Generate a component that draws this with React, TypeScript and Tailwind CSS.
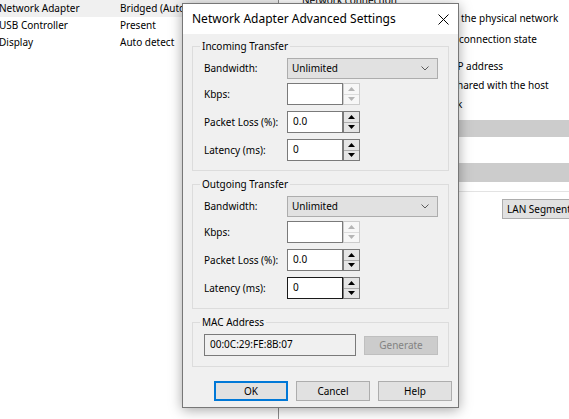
import React from 'react';

const UpArrow = ({ color }: { color: string }) => (
  <svg width="7" height="4" viewBox="0 0 7 4">
    <path d="M3.5 0 L7 4 L0 4 Z" fill={color} />
  </svg>
);

const DownArrow = ({ color }: { color: string }) => (
  <svg width="7" height="4" viewBox="0 0 7 4">
    <path d="M0 0 L7 0 L3.5 4 Z" fill={color} />
  </svg>
);

const Select = () => (
  <div className="flex items-center justify-between w-[151px] h-[21px] bg-[#e1e1e1] border border-[#adadad] pl-[4px] pr-[8px]">
    <span>Unlimited</span>
    <svg width="8" height="5" viewBox="0 0 8 5">
      <path d="M0.5 0.5 L4 4 L7.5 0.5" fill="none" stroke="#5a5a5a" strokeWidth="1" />
    </svg>
  </div>
);

const SpinBox = ({ value, disabled, focused }: { value: string; disabled?: boolean; focused?: boolean }) => (
  <div className="flex h-[22px]">
    <div
      className={`w-[56px] h-full bg-white border pl-[5px] pt-[2px] leading-[14px] ${focused ? 'border-[#1a1a1a]' : 'border-[#7a7a7a]'}`}
    >
      {value}
    </div>
    <div className={`flex flex-col w-[17px] h-full border ${disabled ? 'border-[#cccccc] bg-[#f7f7f7]' : 'border-[#7a7a7a] bg-[#e5e5e5]'}`}>
      <div className={`flex-1 flex items-center justify-center border-b ${disabled ? 'border-[#dcdcdc]' : 'border-[#adadad]'}`}>
        <UpArrow color={disabled ? '#b5b5b5' : '#000'} />
      </div>
      <div className="flex-1 flex items-center justify-center">
        <DownArrow color={disabled ? '#b5b5b5' : '#000'} />
      </div>
    </div>
  </div>
);

const Row = ({ label, children }: { label: string; children: React.ReactNode }) => (
  <div className="flex items-center">
    <span className="w-[83px]">{label}</span>
    {children}
  </div>
);

const TransferGroup = ({ title, focusLatency }: { title: string; focusLatency?: boolean }) => (
  <div className="relative border border-[#dcdcdc] pl-[11px] pt-[11px] pb-[9px]">
    <span className="absolute left-[7px] top-[-8px] bg-[#f0f0f0] px-[2px] leading-[14px]">{title}</span>
    <div className="flex flex-col gap-[6px]">
      <Row label="Bandwidth:">
        <Select />
      </Row>
      <div className="flex flex-col gap-[6px] mt-[-2px]">
        <Row label="Kbps:">
          <SpinBox value="" disabled />
        </Row>
        <Row label="Packet Loss (%):">
          <SpinBox value="0.0" />
        </Row>
        <Row label="Latency (ms):">
          <SpinBox value="0" focused={focusLatency} />
        </Row>
      </div>
    </div>
  </div>
);

const Button = ({ label, primary }: { label: string; primary?: boolean }) => (
  <button
    className={`w-[74px] h-[20px] bg-[#e1e1e1] flex items-center justify-center text-black ${primary ? 'border-2 border-[#0078d7]' : 'border border-[#adadad]'}`}
  >
    {label}
  </button>
);

export default function App() {
  return (
    <div className="relative w-[569px] h-[419px] overflow-hidden bg-white text-[10px] text-black font-['Noto_Sans',sans-serif]">
      <div className="flex h-full">
        {/* device list */}
        <div className="w-[278px] shrink-0 flex flex-col">
          <div className="flex h-[17px] items-center bg-[#f0f0f0] pl-[1px]">
            <span className="w-[121px] ml-[-2px]">Network Adapter</span>
            <span className="whitespace-nowrap">Bridged (Automatic)</span>
          </div>
          <div className="flex h-[17px] items-center pl-[1px]">
            <span className="w-[121px] ml-[-2px]">USB Controller</span>
            <span>Present</span>
          </div>
          <div className="flex h-[17px] items-center pl-[1px]">
            <span className="w-[121px] ml-[-2px]">Display</span>
            <span>Auto detect</span>
          </div>
        </div>

        {/* settings panel */}
        <div className="flex-1 min-w-0 overflow-hidden flex flex-col border-l border-[#8c8c8c] leading-[14px]">
          <div className="h-[14px] mt-[-7px] pl-[23px] whitespace-nowrap">Network connection</div>
          <div className="h-[14px] mt-[4px] pl-[182px] whitespace-nowrap">the physical network</div>
          <div className="h-[14px] mt-[7px] pl-[180px] whitespace-nowrap">connection state</div>
          <div className="h-[14px] mt-[13px] pl-[175px] whitespace-nowrap">IP address</div>
          <div className="h-[14px] mt-[5px] pl-[178px] whitespace-nowrap">hared with the host</div>
          <div className="h-[14px] mt-[5px] pl-[178px]">k</div>
          <div className="h-[17px] mt-[9px] bg-[#cccccc]" />
          <div className="h-[19px] mt-[26px] bg-[#cccccc]" />
          <div className="h-px mt-[9px] bg-[#e3e3e3]" />
          <div className="mt-[7px] pl-[223px]">
            <div className="h-[20px] w-[120px] bg-[#e1e1e1] border border-[#adadad] pl-[4px] flex items-center whitespace-nowrap">
              LAN Segments...
            </div>
          </div>
        </div>
      </div>

      {/* dialog window */}
      <div className="absolute left-[182px] top-[3px] w-[277px] h-[405px] flex flex-col bg-[#f0f0f0] border border-[#777777] shadow-[0_2px_12px_rgba(0,0,0,0.35)]">
        <div className="h-[30px] bg-white flex items-center justify-between pl-[9px] pr-[9px] shrink-0">
          <span className="text-[12px]">Network Adapter Advanced Settings</span>
          <svg width="11" height="11" viewBox="0 0 11 11">
            <path d="M0.5 0.5 L10.5 10.5 M10.5 0.5 L0.5 10.5" stroke="#000" strokeWidth="1" />
          </svg>
        </div>
        <div className="flex flex-col px-[9px] pt-[12px]">
          <TransferGroup title="Incoming Transfer" />
          <div className="mt-[13px]">
            <TransferGroup title="Outgoing Transfer" focusLatency />
          </div>
          <div className="relative mt-[13px] border border-[#dcdcdc] pl-[11px] pt-[11px] pb-[10px] flex items-center gap-[8px]">
            <span className="absolute left-[7px] top-[-8px] bg-[#f0f0f0] px-[2px] leading-[14px]">MAC Address</span>
            <div className="w-[152px] h-[22px] border border-[#7a7a7a] bg-[#f0f0f0] pl-[5px] pt-[2px] leading-[14px]">
              00:0C:29:FE:8B:07
            </div>
            <div className="w-[74px] h-[19px] bg-[#cccccc] border border-[#bfbfbf] text-[#838383] flex items-center justify-center">
              Generate
            </div>
          </div>
          <div className="flex justify-end gap-[8px] mt-[14px] mr-[-3px]">
            <Button label="OK" primary />
            <Button label="Cancel" />
            <Button label="Help" />
          </div>
        </div>
      </div>
    </div>
  );
}
